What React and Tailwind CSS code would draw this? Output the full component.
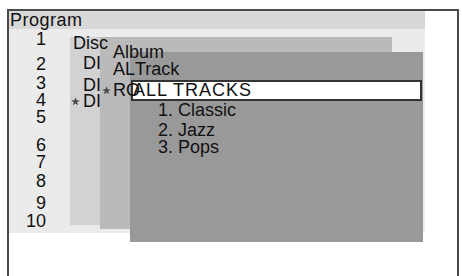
import React from 'react';

const font = { fontFamily: '"Liberation Sans", Arial, sans-serif' };

const numbers = [
  { n: '1', mt: 'mt-[2px]' },
  { n: '2', mt: 'mt-[9px]' },
  { n: '3', mt: 'mt-[3px]' },
  { n: '4', mt: 'mt-[1px]' },
  { n: '5', mt: 'mt-[1px]' },
  { n: '6', mt: 'mt-[12px]' },
  { n: '7', mt: 'mt-[1px]' },
  { n: '8', mt: 'mt-[3px]' },
  { n: '9', mt: 'mt-[6px]' },
  { n: '10', mt: 'mt-[2px]' },
];

function Star() {
  return (
    <svg width="9" height="9" viewBox="0 0 10 10" className="mt-[4px] shrink-0">
      <path d="M5 0.4 6.2 3.7 9.7 3.8 6.9 5.9 7.9 9.3 5 7.3 2.1 9.3 3.1 5.9 0.3 3.8 3.8 3.7Z" fill="#4a4a4a" />
    </svg>
  );
}

function Line({ className = '', children }) {
  return (
    <div className={`relative z-10 h-[16px] leading-[16px] whitespace-nowrap ${className}`}>
      {children}
    </div>
  );
}

export default function App() {
  return (
    <div className="w-[462px] h-[276px] bg-white overflow-hidden pl-[7px] pt-[9px] text-[18px] text-[#111]" style={font}>
      <div className="w-[452px] h-[267px] border-2 border-b-0 border-[#4a4a4a]">
        {/* Program panel */}
        <div className="relative w-[416px] h-[222px] bg-[#ebebeb]">
          <div className="h-[18px] bg-[#d8d8d8] leading-[18px] pl-[1px] tracking-[0.5px] relative z-10">Program</div>
          <div className="w-[37px] flex flex-col items-end">
            {numbers.map((r) => (
              <Line key={r.n} className={r.mt}>{r.n}</Line>
            ))}
          </div>

          {/* Disc submenu */}
          <div className="absolute left-[61px] top-[26px] w-[292px] h-[188px] bg-[#d2d2d2]">
            <Line className="-mt-[2px] pl-[3px]">Disc</Line>
            <Line className="mt-[4px] pl-[13px]">DI</Line>
            <Line className="mt-[6px] pl-[13px]">DI</Line>
            <Line className="mt-[0px] pl-[1px] flex">
              <span className="w-[12px] flex"><Star /></span>DI
            </Line>
          </div>

          {/* Album submenu */}
          <div className="absolute left-[91px] top-[26px] w-[292px] h-[192px] bg-[#bababa]">
            <Line className="mt-[7px] pl-[13px]">Album</Line>
            <Line className="mt-[1px] pl-[13px]">AL</Line>
            <Line className="mt-[5px] pl-[2px] flex">
              <span className="w-[11px] flex"><Star /></span>RO
            </Line>
          </div>

          {/* Track submenu */}
          <div className="absolute left-[121px] top-[41px] w-[293px] h-[190px] bg-[#999999] pt-[9px]">
            <div className="h-[16px] leading-[16px] pl-[5px]">Track</div>
            <div className="mt-[3px] ml-[1px] w-[291px] h-[21px] bg-white border-2 border-[#333] leading-[16px] tracking-[1px] whitespace-nowrap">
              ALL TRACKS
            </div>
            <div className="mt-[1px] h-[16px] leading-[16px] pl-[28px]">1. Classic</div>
            <div className="mt-[4px] h-[16px] leading-[16px] pl-[28px]">2. Jazz</div>
            <div className="mt-[1px] h-[16px] leading-[16px] pl-[28px]">3. Pops</div>
          </div>
        </div>
      </div>
    </div>
  );
}
